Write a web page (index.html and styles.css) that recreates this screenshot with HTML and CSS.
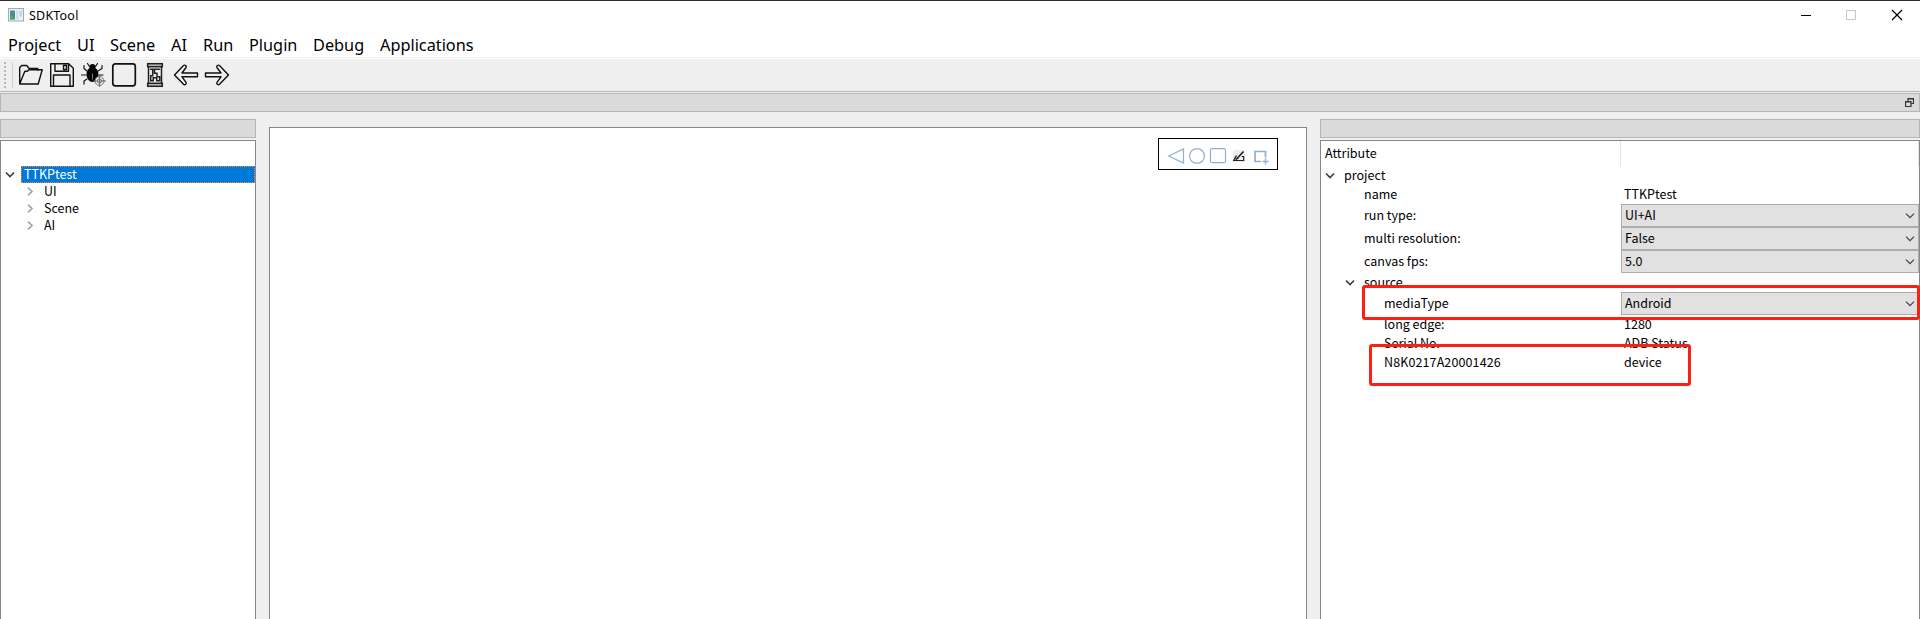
FILE: index.html
```html
<!DOCTYPE html>
<html lang="en">
<head>
<meta charset="utf-8">
<title>SDKTool</title>
<link rel="stylesheet" href="styles.css">
</head>
<body>
<div class="window">
  <header class="titlebar">
    <svg class="app-icon" width="16" height="14" viewBox="0 0 16 14"><rect x=".5" y=".5" width="15" height="12.500" fill="#edf2f5" stroke="#a3a9b0"/><rect x="2" y="2.500" width="5" height="9" fill="#468e93"/><rect x="2" y="8" width="3" height="3.500" fill="#55a26f"/><rect x="8" y="2.500" width="2.500" height="9" fill="#d5dfe8"/><rect x="11.500" y="2.500" width="2.500" height="6" fill="#c0d5e6"/></svg>
    <span class="title">SDKTool</span>
    <svg class="controls" width="102" height="12" viewBox="0 0 102 12"><path d="M0 6.500h10" stroke="#000"/><rect x="45.500" y="1.500" width="9" height="9" fill="none" stroke="#c8c8c8"/><path d="M91 1l10 10M101 1L91 11" stroke="#000" stroke-width="1.200"/></svg>
  </header>
  <nav class="menubar">
    <span class="m-project">Project</span><span class="m-ui">UI</span><span class="m-scene">Scene</span><span class="m-ai">AI</span><span class="m-run">Run</span><span class="m-plugin">Plugin</span><span class="m-debug">Debug</span><span>Applications</span>
  </nav>
  <div class="toolbar">
    <svg width="235" height="32" viewBox="0 0 235 32" fill="none" stroke="#111" stroke-width="1.400" stroke-linejoin="round" stroke-linecap="round">
      <path d="M5 3v26" stroke="#b8b8b8" stroke-width="2" stroke-dasharray="2 2" stroke-linecap="butt"/>
      <path d="M12.500 4v24" stroke="#cfcfcf" stroke-width="1"/>
      <path d="M19.700 24.500V8.500l2-2h5l2.500 3h8.500l.5 1.800M19.700 25l5-12.500 3-.5 1-1.300h13.500l-4 14.300z"/>
      <path d="M50.700 4.700h18l4.600 4.600v18H50.700zM55 4.700v7.500h13.500V4.700M63.500 6.500h3v4h-3zM53.500 27.300V16h16.500v11.300"/>
      <path d="M87 12l-3-2.500V6.500M86 16h-4.500M87 20l-3 2v3M98 12l4-2.500V6.500M99 16h4M89.500 7.500l-2-3M95.500 7.500l2-3" stroke-width="1.200"/>
      <ellipse cx="92.500" cy="15.500" rx="6" ry="7.500" fill="#050505" stroke="none"/><circle cx="92.500" cy="8" r="3" fill="#050505" stroke="none"/><path d="M92.500 15v5" stroke="#999" stroke-width=".8"/>
      <g stroke="#666" stroke-width=".9"><circle cx="99.500" cy="22" r="4.500" fill="#eee"/><circle cx="99.500" cy="22" r="2.200"/><path d="M93.500 22h12M99.500 16.500v11"/></g>
      <rect x="112.800" y="4.800" width="22.500" height="22" rx="2.500" stroke-width="1.700"/>
      <g stroke="#222" stroke-width="1.500" stroke-linejoin="miter"><rect x="147.700" y="4.700" width="14.600" height="3" fill="#bbb"/><rect x="147.700" y="24.300" width="14.600" height="3" fill="#bbb"/><path d="M148.500 7.700v16.600M161.500 7.700v16.600M150.500 10.200h4M152.700 10.200v6.600h-2v5h2.500v-3h3.500v3h3v-4h-2.700v-3.500h-2.500v-4h5"/></g>
      <path d="M174.500 16l9-9.500c1.500-1 3.500.5 2.500 2l-4 5.500h15.500v3.800H182l4 5.500c1 1.500-1 3-2.500 2zM228.500 16l-9-9.500c-1.500-1-3.500.5-2.500 2l4 5.500h-15.500v3.800H221l-4 5.500c-1 1.500 1 3 2.500 2z"/>
    </svg>
  </div>
  <div class="dock-title top-dock"><svg width="9" height="9" viewBox="0 0 9 9"><path d="M3 3V.5h5.500v5H6M3 1h5.500M.5 3.500H6v5H.5zM.5 4H6" fill="none" stroke="#333" stroke-width="1.200"/></svg></div>
  <main class="work">
    <section class="left">
      <div class="dock-title"></div>
      <div class="panel tree">
        <div class="root"><svg width="10" height="8" viewBox="0 0 10 8"><path d="M1 1.500l4 4 4-4" fill="none" stroke="#404040" stroke-width="1.700"/></svg><span class="selected">TTKPtest</span></div>
        <div class="node"><svg width="6" height="9" viewBox="0 0 6 9"><path d="M1 .7l4 3.800-4 3.800" fill="none" stroke="#a6a6a6" stroke-width="1.600"/></svg><span class="label">UI</span></div>
        <div class="node"><svg width="6" height="9" viewBox="0 0 6 9"><path d="M1 .7l4 3.800-4 3.800" fill="none" stroke="#a6a6a6" stroke-width="1.600"/></svg><span class="label">Scene</span></div>
        <div class="node"><svg width="6" height="9" viewBox="0 0 6 9"><path d="M1 .7l4 3.800-4 3.800" fill="none" stroke="#a6a6a6" stroke-width="1.600"/></svg><span class="label">AI</span></div>
      </div>
    </section>
    <section class="canvas">
      <div class="palette">
        <svg width="118" height="30" viewBox="0 0 118 30" fill="none" stroke="#91afd0" stroke-width="1.200">
          <path d="M9.700 17l14.800-7v14z"/><circle cx="38" cy="17" r="7.400"/><rect x="51.500" y="9.600" width="15" height="14" rx="1.500"/>
          <rect x="74" y="11" width="12" height="12" fill="#eee" stroke="none"/><path d="M78 17h-1l-2.300 4.500h10V17.500h-2" stroke="#222"/><path d="M78 19.500l6.500-7M76.500 20.500l3-2" stroke="#222" stroke-width="1.700"/>
          <path d="M102 22.500h-6v-10h10.500v6" stroke-width="1.700"/><path d="M106.500 19.500v6M103.500 22.500h6" stroke-width="1.400"/>
        </svg>
      </div>
    </section>
    <section class="right">
      <div class="dock-title"></div>
      <div class="panel props">
        <div class="row head"><span class="key">Attribute</span><span class="divider"></span></div>
        <div class="row"><svg class="chev l0" width="10" height="8" viewBox="0 0 10 8"><path d="M1 1.500l4 4 4-4"/></svg><span class="key">project</span></div>
        <div class="row"><span class="key l1">name</span><span class="value">TTKPtest</span></div>
        <div class="row tall"><span class="key l1">run type:</span><span class="combo"><span class="label">UI+AI</span><svg class="drop" width="10" height="6" viewBox="0 0 10 6"><path d="M1 .7l4 4 4-4"/></svg></span></div>
        <div class="row tall"><span class="key l1">multi resolution:</span><span class="combo"><span class="label">False</span><svg class="drop" width="10" height="6" viewBox="0 0 10 6"><path d="M1 .7l4 4 4-4"/></svg></span></div>
        <div class="row tall"><span class="key l1">canvas fps:</span><span class="combo"><span class="label">5.0</span><svg class="drop" width="10" height="6" viewBox="0 0 10 6"><path d="M1 .7l4 4 4-4"/></svg></span></div>
        <div class="row"><svg class="chev sub" width="10" height="8" viewBox="0 0 10 8"><path d="M1 1.500l4 4 4-4"/></svg><span class="key">source</span></div>
        <div class="row tall"><span class="key l2">mediaType</span><span class="combo"><span class="label">Android</span><svg class="drop" width="10" height="6" viewBox="0 0 10 6"><path d="M1 .7l4 4 4-4"/></svg></span></div>
        <div class="row"><span class="key l2">long edge:</span><span class="value">1280</span></div>
        <div class="row"><span class="key l2">Serial No.</span><span class="value">ADB Status</span></div>
        <div class="row"><span class="key l2 serial">N8K0217A20001426</span><span class="value">device</span></div>
        <div class="mark mark-media"></div>
        <div class="mark mark-device"></div>
      </div>
    </section>
  </main>
</div>
</body>
</html>
```
FILE: styles.css
```css
* { box-sizing: border-box; }
body { margin: 0; background: #efefef; overflow: hidden; color: #000; font: 12.500px/17px "Noto Sans CJK SC", "Noto Sans", sans-serif; }
svg { display: block; flex: none; }
.window { height: 619px; display: flex; flex-direction: column; }
.titlebar { height: 30px; border-top: 1px solid #2d2d2d; background: #fff; display: flex; align-items: center; padding: 0 17px 2px 8px; font-family: "Noto Sans", sans-serif; font-size: 12.500px; }
.title { margin-left: 5px; padding-top: 2px; letter-spacing: .2px; }
.controls { margin-left: auto; }
.menubar { height: 29px; background: #fff; border-bottom: 1px solid #fff; box-shadow: inset 0 -1px #efefef; display: flex; padding: 3px 0 0 8px; font: 16.300px/24px "Noto Sans", sans-serif; white-space: nowrap; }
.menubar span { flex: none; }
.m-project { width: 69px; }
.m-ui { width: 33px; }
.m-scene { width: 61px; }
.m-ai { width: 32px; }
.m-run { width: 46px; }
.m-plugin { width: 64px; }
.m-debug { width: 67px; }
.toolbar { height: 33px; border-bottom: 1px solid #b6b6b6; }
.dock-title { height: 19px; border: 1px solid #b6b6b6; background: #dadada; flex: none; }
.top-dock { margin-top: 1px; display: flex; justify-content: flex-end; align-items: center; padding-right: 5px; }
.work { margin-top: 7px; flex: 1; min-height: 0; display: grid; grid-template-columns: 256px 1038px 600px; column-gap: 13px; }
.left, .right { display: flex; flex-direction: column; }
.panel { margin-top: 2px; flex: 1; background: #fff; border: 1px solid #828790; border-bottom: 0; }
.canvas { margin-top: 8px; background: #fff; border: 1px solid #828790; border-bottom: 0; display: flex; justify-content: flex-end; align-items: flex-start; padding: 10px 28px 0 0; }
.palette { width: 120px; height: 32px; border: 1px solid #000; }
.tree { padding-top: 25px; }
.root { display: flex; align-items: center; height: 17px; padding-left: 4px; }
.selected { flex: 1; height: 17px; margin-left: 6px; padding-left: 2px; line-height: 14px; background: #0078d7; color: #fff; border: 1px dotted #ff8728; }
.node { display: flex; align-items: center; height: 17px; padding-left: 26px; gap: 11px; }
.label { padding-bottom: 2px; }
.props { position: relative; }
.row { height: 19px; display: flex; align-items: center; white-space: nowrap; }
.head { height: 25px; padding-left: 4px; }
.tall { height: 23px; }
.key { flex: 1; padding-bottom: 2px; }
.divider { width: 299px; height: 25px; border-left: 1px solid #e5e5e5; border-right: 1px solid #e5e5e5; }
.chev path, .drop path { fill: none; stroke: #404040; stroke-width: 1.700; }
.drop path { stroke-width: 1.200; }
.l0 { margin: 0 9px 0 4px; }
.sub { margin: 0 9px 0 24px; }
.l1 { padding-left: 43px; }
.l2 { padding-left: 63px; }
.serial { letter-spacing: .12px; }
.value { width: 295px; padding-bottom: 2px; }
.combo { width: 298px; height: 23px; background: #e1e1e1; border: 1px solid #adadad; padding: 0 3px; display: flex; align-items: center; justify-content: space-between; }
.mark { position: absolute; border: 3px solid #fe1f14; border-radius: 3px; }
.mark-media { left: 41px; top: 144px; width: 558px; height: 35px; }
.mark-device { left: 48px; top: 203px; width: 322px; height: 42px; }
```
